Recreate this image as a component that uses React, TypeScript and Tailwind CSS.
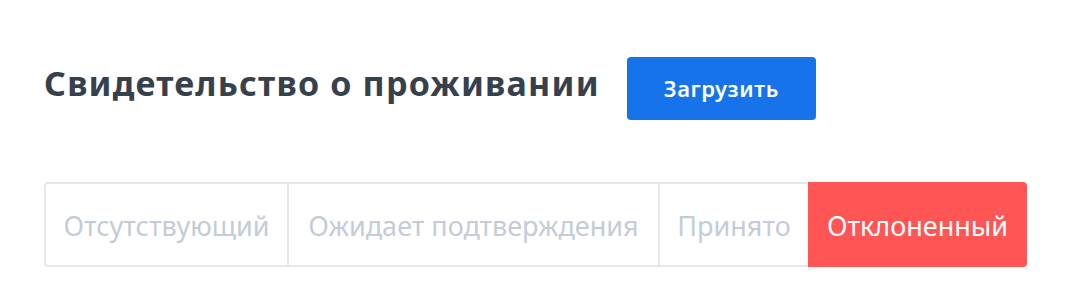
import React from "react";

const statuses = [
  { label: "Отсутствующий", width: "w-[243px]" },
  { label: "Ожидает подтверждения", width: "w-[371px]" },
  { label: "Принято", width: "w-[150px]" },
  { label: "Отклоненный", width: "w-[219px]", active: true },
];

export default function App() {
  return (
    <div
      className="min-h-[304px] w-[1068px] bg-white pl-[44px] pt-[57px]"
      style={{ fontFamily: '"Noto Sans", "Open Sans", sans-serif' }}
    >
      <div className="flex items-center">
        <h1 className="-mt-[12px] text-[34px] font-bold leading-none tracking-[1.2px] text-[#36414d]">
          Свидетельство о проживании
        </h1>
        <button
          type="button"
          className="ml-[27px] h-[63px] w-[189px] rounded-[4px] bg-[#1673ea] text-[22px] font-semibold tracking-[0.6px] text-white"
        >
          Загрузить
        </button>
      </div>

      <div className="mt-[62px] flex h-[85px] w-[983px]">
        {statuses.map((s, i) => (
          <div
            key={s.label}
            className={`flex items-center justify-center pt-[4px] text-[27px] ${s.width} ${
              s.active
                ? "rounded-r-[4px] bg-[#ff5555] text-white"
                : `border-y-2 border-[#e3e8ee] text-[#c3ccd8] ${
                    i === 0 ? "rounded-l-[4px] border-l-2" : "border-l-2"
                  }`
            }`}
          >
            {s.label}
          </div>
        ))}
      </div>
    </div>
  );
}
